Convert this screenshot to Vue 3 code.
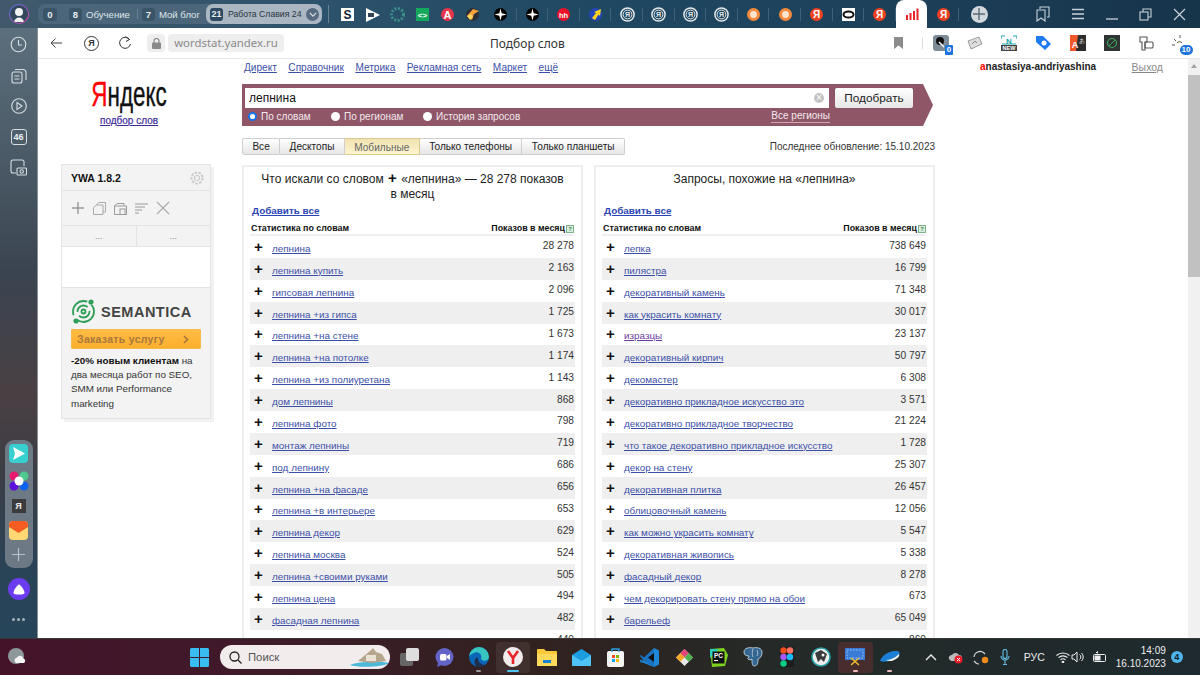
<script setup>
const smallTabs = [
  '<rect x="2" y="2" width="13" height="13" fill="#fff"/><text x="8.5" y="13" font-size="12" font-weight="700" text-anchor="middle" fill="#123">S</text>',
  '<path d="M2 2l14 7-14 7z" fill="#fff"/><path d="M4 7h6v4H4z" fill="#345"/>',
  '<circle cx="8.5" cy="8.5" r="6" fill="none" stroke="#3a8f8a" stroke-width="3" stroke-dasharray="2 1.5"/>',
  '<rect x="2" y="2" width="13" height="13" fill="#14a85c"/><text x="8.5" y="11.5" font-size="8" font-weight="700" text-anchor="middle" fill="#fff">&lt;&gt;</text>',
  '<circle cx="8.5" cy="8.5" r="6.5" fill="#e8354c"/><text x="8.5" y="12.5" font-size="11" font-weight="700" text-anchor="middle" fill="#fff">A</text>',
  '<circle cx="8.5" cy="8.5" r="6.5" fill="#2b3038"/><path d="M3 10l6-7 6 2-5 3-2 6z" fill="#f8a03a"/><path d="M3 10l4-2 2 3-3 3z" fill="#ffd75a"/>'
]
const star = '<circle cx="8.5" cy="8.5" r="6.5" fill="#000"/><path d="M8.5 2.5l1.2 4.8 4.8 1.2-4.8 1.2-1.2 4.8-1.2-4.8-4.8-1.2 4.8-1.2z" fill="#fff"/>'
const yaRing = '<circle cx="8.5" cy="8.5" r="6.6" fill="none" stroke="#e6e9ec" stroke-width="1.5"/><circle cx="8.5" cy="8.5" r="4.4" fill="none" stroke="#e6e9ec" stroke-width="1"/><text x="8.5" y="11" font-size="7" font-weight="700" text-anchor="middle" fill="#e6e9ec">Я</text>'
const orange = '<circle cx="8.5" cy="8.5" r="6.5" fill="#f58a3c"/><circle cx="8.5" cy="8.5" r="3.4" fill="#ffe3cf"/>'
const yaRed = '<circle cx="8.5" cy="8.5" r="6.5" fill="#f0401f"/><text x="8.5" y="12.2" font-size="10" font-weight="700" text-anchor="middle" fill="#fff">Я</text>'
const wideTabs = [
  star, star,
  '<circle cx="8.5" cy="8.5" r="6.5" fill="#e8132a"/><text x="8.5" y="11.5" font-size="7.5" font-weight="700" text-anchor="middle" fill="#fff">hh</text>',
  '<circle cx="8.5" cy="8.5" r="6.5" fill="#2446b8"/><path d="M5 12l4-5-2-1 7-3-1 7-1.5-1.5L8 14z" fill="#ffd21f"/>',
  yaRing, yaRing, yaRing, yaRing, orange, orange, yaRed,
  '<rect x="2" y="2" width="13" height="13" fill="#fff"/><ellipse cx="8.5" cy="8.5" rx="5" ry="3" fill="none" stroke="#111" stroke-width="2"/>',
  yaRed,
  '<path d="M3 9h2v5H3zM6.5 7h2v7h-2zM10 5h2v9h-2zM13.500 2.500h2V14h-2z" fill="#e8232a"/>',
  yaRed
]

const leftRows = [
  ['лепнина', '28 278'], ['лепнина купить', '2 163'], ['гипсовая лепнина', '2 096'],
  ['лепнина +из гипса', '1 725'], ['лепнина +на стене', '1 673'], ['лепнина +на потолке', '1 174'],
  ['лепнина +из полиуретана', '1 143'], ['дом лепнины', '868'], ['лепнина фото', '798'],
  ['монтаж лепнины', '719'], ['под лепнину', '686'], ['лепнина +на фасаде', '656'],
  ['лепнина +в интерьере', '653'], ['лепнина декор', '629'], ['лепнина москва', '524'],
  ['лепнина +своими руками', '505'], ['лепнина цена', '494'], ['фасадная лепнина', '482'],
  ['', '440']
]
const rightRows = [
  ['лепка', '738 649'], ['пилястра', '16 799'], ['декоративный камень', '71 348'],
  ['как украсить комнату', '30 017'], ['изразцы', '23 137', true], ['декоративный кирпич', '50 797'],
  ['декомастер', '6 308'], ['декоративно прикладное искусство это', '3 571'],
  ['декоративно прикладное творчество', '21 224'], ['что такое декоративно прикладное искусство', '1 728'],
  ['декор на стену', '25 307'], ['декоративная плитка', '26 457'], ['облицовочный камень', '12 056'],
  ['как можно украсить комнату', '5 547'], ['декоративная живопись', '5 338'], ['фасадный декор', '8 278'],
  ['чем декорировать стену прямо на обои', '673'], ['барельеф', '65 049'], ['', '860']
]
const cards = [
  { title: ['Что искали со словом', '«лепнина» — 28 278 показов в месяц'], rows: leftRows },
  { title: ['Запросы, похожие на «лепнина»'], rows: rightRows }
]
const topLinks = ['Директ', 'Справочник', 'Метрика', 'Рекламная сеть', 'Маркет', 'ещё']
const modes = ['Все', 'Десктопы', 'Мобильные', 'Только телефоны', 'Только планшеты']
const radios = ['По словам', 'По регионам', 'История запросов']
</script>

<template>
  <div class="app">
    <header class="topbar">
      <div class="avatar"><div class="avatar-in"><svg width="16" height="16" viewBox="0 0 16 16"><circle cx="8" cy="6" r="4" fill="#f2f2f2"/><path d="M3 16c1-6 9-6 10 0z" fill="#f2f2f2"/></svg></div></div>
      <div class="groups">
        <span class="count first">0</span>
        <span class="count">8</span><span class="gname">Обучение</span>
        <i class="gsep"></i>
        <span class="count">7</span><span class="gname">Мой блог</span>
        <div class="gactive">
          <span class="count dark">21</span><span class="gname dk">Работа Славия 24</span>
          <span class="chev"><svg width="8" height="5" viewBox="0 0 10 6"><path d="M1 1l4 4 4-4" fill="none" stroke="#dfe5ea" stroke-width="1.4"/></svg></span>
        </div>
      </div>
      <i class="tsep"></i>
      <div class="tab small" v-for="(t, i) in smallTabs" :key="'s' + i">
        <svg width="17" height="17" viewBox="0 0 17 17" v-html="t"></svg>
      </div>
      <div class="tab wide" v-for="(t, i) in wideTabs" :key="'w' + i" :class="{ active: i === 13 }">
        <svg width="17" height="17" viewBox="0 0 17 17" v-html="t"></svg>
      </div>
      <div class="addtab"><svg width="12" height="12" viewBox="0 0 12 12"><path d="M6 0v12M0 6h12" stroke="#5b6b78" stroke-width="1.4"/></svg></div>
      <div class="winbtns">
        <svg width="14" height="16" viewBox="0 0 14 16" fill="none" stroke="#c8d2da" stroke-width="1.1"><path d="M4 3V1h9v10h-2"/><path d="M1 4h8v11l-4-3-4 3z"/></svg>
        <svg width="14" height="12" viewBox="0 0 14 12" stroke="#c8d2da" stroke-width="1.3"><path d="M1 1.500h12M1 6h12M1 10.500h12"/></svg>
        <svg width="12" height="12" viewBox="0 0 12 12" stroke="#c8d2da" stroke-width="1.3"><path d="M0 11h12"/></svg>
        <svg width="13" height="13" viewBox="0 0 13 13" fill="none" stroke="#c8d2da" stroke-width="1.1"><rect x="1" y="4" width="8" height="8"/><path d="M4 4V1h8v8H9"/></svg>
        <svg width="13" height="13" viewBox="0 0 13 13" stroke="#c8d2da" stroke-width="1.2"><path d="M1 1l11 11M12 1L1 12"/></svg>
      </div>
    </header>

    <aside class="sidebar">
      <div class="sideicons">
        <svg width="17" height="17" viewBox="0 0 17 17" fill="none" stroke="#d5dde3" stroke-width="1.1"><circle cx="8.500" cy="8.500" r="7.300"/><path d="M8.500 4v5h3.500"/></svg>
        <svg width="16" height="16" viewBox="0 0 16 16" fill="none" stroke="#d5dde3" stroke-width="1.1"><rect x="1" y="4" width="10" height="11" rx="2"/><path d="M4 1.500h8a3 3 0 0 1 3 3V12M3.500 8h5M3.500 11h5"/></svg>
        <svg width="16" height="16" viewBox="0 0 16 16" fill="none" stroke="#d5dde3" stroke-width="1.1"><circle cx="8" cy="8" r="7.300"/><path d="M6 4.500l5 3.500-5 3.500z"/></svg>
        <div class="sbadge">46</div>
        <svg width="17" height="17" viewBox="0 0 17 17" fill="none" stroke="#d5dde3" stroke-width="1.1"><path d="M6 14H3a2 2 0 0 1-2-2V3a2 2 0 0 1 2-2h9a2 2 0 0 1 2 2v4"/><rect x="7" y="9" width="9.500" height="7" rx="1"/><circle cx="11.700" cy="12.500" r="1.700"/></svg>
      </div>
      <div class="spacer"></div>
      <div class="dock">
        <svg width="19" height="19" viewBox="0 0 19 19"><rect width="19" height="19" rx="4" fill="#35d0cf"/><path d="M4 3l12 6.500L4 16l2-6.500z" fill="#fff"/></svg>
        <svg width="20" height="20" viewBox="0 0 20 20"><circle cx="5" cy="5" r="4.500" fill="#e6186d"/><circle cx="15" cy="5" r="4.500" fill="#4fc98f"/><circle cx="5" cy="15" r="4.500" fill="#5c12d8"/><circle cx="15" cy="15" r="4.500" fill="#0f62f0"/><circle cx="10" cy="10" r="4.500" fill="#fff"/></svg>
        <div class="yabox">Я</div>
        <svg width="19" height="19" viewBox="0 0 19 19"><rect width="19" height="19" rx="4" fill="#ffd873"/><path d="M0 4a4 4 0 0 1 4-4h11a4 4 0 0 1 4 4v2l-9.500 6L0 6z" fill="#f45c22"/></svg>
        <svg width="13" height="13" viewBox="0 0 13 13" stroke="#b9c3cb" stroke-width="1.2"><path d="M6.500 0v13M0 6.500h13"/></svg>
      </div>
      <div class="alice"><svg width="12" height="11" viewBox="0 0 12 11"><path d="M6 .5c1.500 0 5.500 6 5.500 8 0 2-3 2-5.500 2s-5.500 0-5.500-2c0-2 4-8 5.500-8z" fill="#fff"/></svg></div>
      <div class="dots"><i></i><i></i><i></i></div>
    </aside>

    <main class="browser">
      <div class="toolbar">
        <svg class="t-back" width="12" height="12" viewBox="0 0 12 12" fill="none" stroke="#444" stroke-width="1"><path d="M12 6H1M5.500 1.500L1 6l4.500 4.500"/></svg>
        <div class="t-ya">Я</div>
        <svg class="t-reload" width="14" height="14" viewBox="0 0 14 14" fill="none" stroke="#333" stroke-width="1"><path d="M11.500 3.500A5.500 5.500 0 1 0 12.500 8"/><path d="M7.500 .5l4 3-3.500 2"/></svg>
        <div class="t-lock"><svg width="9" height="11" viewBox="0 0 9 11"><rect y="4.500" width="9" height="6.500" rx="1" fill="#8a8a8a"/><path d="M2 5V3a2.500 2.500 0 0 1 5 0v2" fill="none" stroke="#8a8a8a" stroke-width="1.200"/></svg></div>
        <div class="t-url">wordstat.yandex.ru</div>
        <div class="t-title">Подбор слов</div>
        <svg class="t-mark" width="9" height="12" viewBox="0 0 9 12"><path d="M0 0h9v12L4.500 8.500 0 12z" fill="#8c8c8c"/></svg>
        <i class="t-sep"></i>
        <div class="exts">
          <div class="ext"><svg width="16" height="16" viewBox="0 0 16 16"><rect width="16" height="16" rx="3" fill="#7e8b99"/><circle cx="7" cy="6" r="4" fill="#111"/><path d="M6 7l5 5" stroke="#fff" stroke-width="1.500"/></svg><b class="extnum sq">0</b></div>
          <div class="ext"><svg width="16" height="16" viewBox="0 0 16 16"><path d="M1 6l11-4 3 7-11 5z" fill="#ddd" stroke="#888" stroke-width=".8"/><path d="M5 9l3-3 2 2" fill="none" stroke="#888"/></svg></div>
          <div class="ext"><svg width="16" height="16" viewBox="0 0 16 16"><path d="M0 4V1h4M12 1h4v3M1 9h14" fill="none" stroke="#1ba3a8" stroke-width="1.200"/><text x="8" y="8.500" font-size="8" font-weight="700" text-anchor="middle" fill="#1ba3a8">N</text><rect y="10" width="16" height="6" fill="#444"/><text x="8" y="15.200" font-size="5.500" font-weight="700" text-anchor="middle" fill="#fff">NEW</text></svg></div>
          <div class="ext"><svg width="15" height="15" viewBox="0 0 15 15"><path d="M0 0h7l8 8-6 6-9-8z" fill="#1d7bf0"/><circle cx="8" cy="7" r="2.500" fill="#fff"/></svg></div>
          <div class="ext"><svg width="16" height="16" viewBox="0 0 16 16"><rect width="16" height="16" fill="#2c2c2c"/><path d="M0 0h8L6 16H0z" fill="#f0582a"/><text x="5" y="13" font-size="9" font-weight="700" text-anchor="middle" fill="#fff">A</text><text x="12" y="8" font-size="6" text-anchor="middle" fill="#ddd">あ</text></svg></div>
          <div class="ext"><svg width="16" height="16" viewBox="0 0 16 16"><rect width="16" height="16" fill="#2f3432"/><circle cx="8" cy="8" r="4.500" fill="none" stroke="#3ca55c" stroke-width="1.200"/><path d="M5 11l6-6" stroke="#3ca55c"/></svg></div>
          <div class="ext"><svg width="15" height="15" viewBox="0 0 15 15" fill="none" stroke="#555" stroke-width="1.100"><path d="M1 1h7v5H6v8H3V6H1z"/><rect x="6" y="6" width="8" height="6" rx="1"/></svg></div>
          <div class="ext bulb"><svg width="16" height="16" viewBox="0 0 16 16" stroke="#555" stroke-width="1"><path d="M8 0v3M2 4l2 2M0 10h3M5 8a3 3 0 0 1 5 0" fill="none"/></svg><b class="extnum">10</b></div>
        </div>
      </div>

      <div class="page">
        <div class="leftcol">
          <div class="brand">
            <div class="logo"><span class="red">Я</span>ндекс</div>
            <a class="sublink">подбор слов</a>
          </div>
          <div class="ywa">
            <div class="ywa-head">
              <b>YWA 1.8.2</b>
              <svg width="14" height="14" viewBox="0 0 14 14" fill="none" stroke="#c9c9c9" stroke-width="1.100"><circle cx="7" cy="7" r="2.500"/><circle cx="7" cy="7" r="5.500" stroke-dasharray="2.500 1.300" stroke-width="2"/></svg>
            </div>
            <div class="ywa-tools">
              <svg width="14" height="14" viewBox="0 0 14 14" stroke="#999" stroke-width="1.400"><path d="M7 1v12M1 7h12"/></svg>
              <svg width="13" height="13" viewBox="0 0 13 13" fill="none" stroke="#aaa"><path d="M3 3l3-2.500h6.500V10H10"/><path d="M.5 5.500l3-2.500H10v9.500H.5z"/></svg>
              <svg width="13" height="13" viewBox="0 0 13 13" fill="none" stroke="#999"><path d="M.5 4L3 1.500h7v2M.5 4v8.500h12V4z"/><rect x="6" y="7" width="5" height="5.500"/></svg>
              <svg width="13" height="13" viewBox="0 0 13 13" stroke="#999" stroke-width="1.200"><path d="M0 2h13M0 5h10M0 8h7M0 11h4"/></svg>
              <svg width="14" height="14" viewBox="0 0 14 14" stroke="#aaa" stroke-width="1.100"><path d="M1 1l12 12M13 1L1 13"/></svg>
            </div>
            <div class="ywa-tabs"><span>...</span><span>...</span></div>
            <div class="ywa-blank"></div>
            <div class="sem">
              <div class="sem-logo">
                <svg width="25" height="27" viewBox="0 0 25 27" fill="none" stroke="#2f9e58" stroke-width="1.800"><circle cx="12.500" cy="13.500" r="10.500" stroke-dasharray="24 5"/><circle cx="12.500" cy="13.500" r="6" stroke-dasharray="14 4"/><circle cx="12.500" cy="13.500" r="2"/><circle cx="5" cy="23" r="1.700" fill="#2f9e58"/><circle cx="20" cy="4" r="1.700" fill="#2f9e58"/></svg>
                <span>SEMANTICA</span>
              </div>
              <div class="sem-btn"><span>Заказать услугу</span><svg width="6" height="9" viewBox="0 0 6 9" fill="none" stroke="#a8763e" stroke-width="1.600"><path d="M1 1l3.500 3.500L1 8"/></svg></div>
              <p><b>-20% новым клиентам</b> на<br>два месяца работ по SEO,<br>SMM или Performance<br>marketing</p>
            </div>
          </div>
        </div>

        <div class="maincol">
          <nav class="links"><a v-for="l in topLinks" :key="l">{{ l }}</a></nav>
          <div class="band">
            <div class="band-top">
              <div class="query"><span>лепнина</span><span class="clear">×</span></div>
              <div class="submit">Подобрать</div>
            </div>
            <div class="band-bottom">
              <label v-for="(r, i) in radios" :key="r" class="radio"><i :class="{ on: i === 0 }"></i>{{ r }}</label>
              <a class="regions">Все регионы</a>
            </div>
          </div>
          <div class="modes">
            <div class="modegroup"><span v-for="(m, i) in modes" :key="m" :class="{ sel: i === 2 }">{{ m }}</span></div>
            <div class="updated">Последнее обновление: 15.10.2023</div>
          </div>
          <div class="cards">
            <section class="card" v-for="(c, ci) in cards" :key="ci">
              <h3 v-if="c.title.length === 2">Что искали со словом <b class="cross">+</b> «лепнина» — 28 278 показов<br>в месяц</h3>
              <h3 v-else>{{ c.title[0] }}<br>&nbsp;</h3>
              <a class="addall">Добавить все</a>
              <div class="thead"><b>Статистика по словам</b><b>Показов в месяц<i class="help">?</i></b></div>
              <div class="row" v-for="(r, ri) in c.rows" :key="ri">
                <b class="plus" v-if="r[0]">+</b>
                <a :class="{ visited: r[2] }" v-if="r[0]">{{ r[0] }}</a>
                <span class="val">{{ r[1] }}</span>
              </div>
            </section>
          </div>
        </div>

        <div class="rightcol">
          <div class="user"><b><span class="red">a</span>nastasiya-andriyashina</b><a>Выход</a></div>
        </div>
        <div class="scroll">
          <div class="s-arrow"></div>
          <div class="s-thumb"></div>
        </div>
      </div>
    </main>

    <footer class="taskbar">
      <div class="weather"><svg width="19" height="19" viewBox="0 0 19 19"><circle cx="8" cy="8" r="8" fill="#8f979c"/><path d="M8 15a3 3 0 0 1 1-5.500 3.500 3.500 0 0 1 6.500 1A2.500 2.500 0 0 1 16 15z" fill="#f4f4f4"/></svg></div>
      <svg class="win" width="19" height="19" viewBox="0 0 19 19"><path d="M0 1.500A1.500 1.500 0 0 1 1.500 0H9v9H0zM10 0h7.500A1.500 1.500 0 0 1 19 1.500V9h-9zM0 10h9v9H1.500A1.500 1.500 0 0 1 0 17.500zM10 10h9v7.500a1.500 1.500 0 0 1-1.500 1.500H10z" fill="#39bdf0"/></svg>
      <div class="search">
        <svg width="13" height="13" viewBox="0 0 13 13" fill="none" stroke="#222" stroke-width="1.300"><circle cx="5.500" cy="5.500" r="4.500"/><path d="M9 9l3.500 3.500"/></svg>
        <span>Поиск</span>
        <svg class="island" width="40" height="20" viewBox="0 0 40 20"><path d="M0 18c8-4 30-4 40-2-6 4-32 5-40 2z" fill="#4cb8d8"/><path d="M8 14l6-5 6-5 3-3 3 4 6 2 4 7-14 2z" fill="#b5a58c"/><path d="M16 8h10v6H16z" fill="#e9e2d4"/></svg>
      </div>
      <div class="apps">
        <div class="app-i"><svg width="20" height="18" viewBox="0 0 20 18"><rect x="0" y="5" width="13" height="13" rx="2" fill="#666"/><rect x="6" y="0" width="13" height="13" rx="2" fill="#ddd"/></svg></div>
        <div class="app-i"><svg width="19" height="19" viewBox="0 0 19 19"><circle cx="9.500" cy="9" r="9" fill="#6264c8"/><path d="M3 15l-1 4 5-2z" fill="#6264c8"/><rect x="5" y="6" width="6.500" height="6.500" rx="1.500" fill="#fff"/><path d="M12 8l3-2v6l-3-2z" fill="#fff"/></svg></div>
        <div class="app-i"><svg width="20" height="20" viewBox="0 0 20 20"><circle cx="10" cy="10" r="10" fill="#0b66b8"/><path d="M0 10a10 10 0 0 1 20 0c0 4-6 5-8 2 2-5-4-8-7-6-3 1-5 3-5 4z" fill="#36c5c0"/><path d="M8 20c-4-3-3-9 1-10-1 4 3 8 7 8-2 2-5 3-8 2z" fill="#1c2f4c"/></svg><i class="dash"></i></div>
        <div class="app-i cur"><svg width="20" height="20" viewBox="0 0 20 20"><circle cx="10" cy="10" r="10" fill="#f3ecec"/><path d="M5 4l5 7 5-7M10 11v6" fill="none" stroke="#e8232a" stroke-width="2.600"/></svg><i class="dash blue"></i></div>
        <div class="app-i"><svg width="20" height="18" viewBox="0 0 20 18"><path d="M0 2a1 1 0 0 1 1-1h6l2 2h10a1 1 0 0 1 1 1v13H0z" fill="#f9c93a"/><rect y="6" width="20" height="12" fill="#ffd95c"/><rect x="6" y="12" width="8" height="3" fill="#1c7fd6"/></svg></div>
        <div class="app-i"><svg width="19" height="17" viewBox="0 0 19 17"><path d="M0 6l9.500-6L19 6v11H0z" fill="#1c9ce0"/><path d="M0 6l9.500 6L19 6v11H0z" fill="#4fc3f4"/></svg></div>
        <div class="app-i"><svg width="17" height="19" viewBox="0 0 17 19"><rect y="3" width="17" height="16" rx="2" fill="#f4f4f4"/><path d="M5 4V1h7v3" fill="none" stroke="#2aa0e0" stroke-width="1.400"/><rect x="5" y="7" width="3" height="3" fill="#f25022"/><rect x="9" y="7" width="3" height="3" fill="#7fba00"/><rect x="5" y="11" width="3" height="3" fill="#00a4ef"/><rect x="9" y="11" width="3" height="3" fill="#ffb900"/></svg></div>
        <div class="app-i"><svg width="19" height="19" viewBox="0 0 19 19"><path d="M14 0l5 2.500v14L14 19 0 13.500V12l14 3.500z" fill="#1e88d8"/><path d="M14 0L4 9.500 1 7 0 8l3 3.500-3 2L1 15l3-2.500L14 19z" fill="#1a72c0"/><path d="M14 5v9l-6-4.500z" fill="#111"/></svg></div>
        <div class="app-i"><svg width="19" height="19" viewBox="0 0 19 19"><rect x="3.500" y="3.500" width="12" height="12" transform="rotate(45 9.500 9.500)" fill="#e8e8e8"/><path d="M9.500 1l4.200 4.200-4.200 4.300-4.200-4.300z" fill="#e0457a"/><path d="M1 9.500l4.300-4.200 4.200 4.200-4.200 4.200z" fill="#f5a623"/><path d="M18 9.500l-4.300 4.200-4.200-4.200 4.200-4.200z" fill="#4cb050"/></svg></div>
        <div class="app-i"><svg width="19" height="19" viewBox="0 0 19 19"><path d="M1 1l14-1 4 7-3 11-13 1z" fill="#7ed321"/><path d="M1 1l9 0-9 9z" fill="#2bcfb8"/><rect x="3.500" y="3.500" width="12" height="12" fill="#111"/><text x="9.500" y="9.500" font-size="6.500" font-weight="700" text-anchor="middle" fill="#fff">PC</text><path d="M5 12.500h4" stroke="#fff"/></svg></div>
        <div class="app-i"><svg width="20" height="20" viewBox="0 0 20 20"><path d="M1 5c0-4 5-5 9-4 4-1 9 0 9 4 0 5-3 7-4 7 0 3 0 7-4 7-2 0-2-4-2-7-1 1-3 1-4 0-1-1 1-1 1-3-3 0-5-1-5-4z" fill="#336791" stroke="#d8e2ea" stroke-width=".8"/><path d="M10 2c-1 3-1 6 0 8M14 3c1 2 1 4 0 6" fill="none" stroke="#d8e2ea" stroke-width=".7"/></svg></div>
        <div class="app-i"><svg width="14" height="20" viewBox="0 0 14 20"><rect x="-3" y="-1" width="20" height="22" fill="#1d1d1d"/><circle cx="3.500" cy="3.500" r="3.200" fill="#f24e1e"/><circle cx="10" cy="3.500" r="3.200" fill="#ff7262"/><circle cx="3.500" cy="10" r="3.200" fill="#a259ff"/><circle cx="10" cy="10" r="3.200" fill="#1abcfe"/><circle cx="3.500" cy="16.500" r="3.200" fill="#0acf83"/></svg></div>
        <div class="app-i"><svg width="20" height="20" viewBox="0 0 20 20"><circle cx="10" cy="10" r="9" fill="#eee" stroke="#2aa2a8" stroke-width="1.600"/><path d="M4 6l6-3 6 4-3 8-3-3-3 3z" fill="#3a3a3a"/><circle cx="12" cy="8" r="1.500" fill="#fff"/></svg></div>
        <div class="app-i cur red"><svg width="20" height="18" viewBox="0 0 20 18"><rect width="20" height="12" fill="#3a7bd8"/><rect x="2" y="2" width="16" height="8" fill="none" stroke="#9cc4f0" stroke-dasharray="1.500 1.500"/><path d="M6 10l8 7M14 10l-8 7" stroke="#f0c030" stroke-width="1.400"/></svg><i class="dash pink"></i></div>
        <div class="app-i"><svg width="20" height="12" viewBox="0 0 20 12"><path d="M0 10C2 4 10-1 18 0c2 1 2 3 0 5-5 4-12 7-18 5z" fill="#1c7fd6"/><path d="M6 9c4 0 9-2 13-6 1 2-1 4-3 5-3 2-7 3-10 1z" fill="#f2f6fa"/></svg><i class="dash pink low"></i></div>
      </div>
      <div class="tray">
        <svg class="t1" width="12" height="7" viewBox="0 0 12 7" fill="none" stroke="#eee" stroke-width="1.400"><path d="M1 6l5-5 5 5"/></svg>
        <svg width="15" height="13" viewBox="0 0 15 13"><path d="M1 8a3 3 0 0 1 3-4 4 4 0 0 1 7 0 2 2 0 0 1 0 6H3z" fill="#bbb"/><circle cx="10.500" cy="8.500" r="4" fill="#e81e2c"/><path d="M9 7l3 3M12 7l-3 3" stroke="#fff"/></svg>
        <svg class="t3" width="16" height="15" viewBox="0 0 16 15" fill="none" stroke="#ddd" stroke-width="1.100"><path d="M1 7a6 6 0 0 1 10-4l1 1M1 11l2 2a5 5 0 0 0 3 1"/><circle cx="12" cy="10" r="3.200" fill="#f58a1c" stroke="none"/></svg>
        <svg width="10" height="16" viewBox="0 0 10 16" fill="none" stroke="#62c0e8" stroke-width="1.100"><rect x="3" y="0.500" width="4" height="9" rx="2"/><path d="M1 7a4 4 0 0 0 8 0M5 11v4M3 15.500h4"/></svg>
        <span class="lang">РУС</span>
        <svg class="wifi" width="14" height="11" viewBox="0 0 14 11" fill="none" stroke="#eee" stroke-width="1.100"><path d="M.5 3.500a9.500 9.500 0 0 1 13 0M2.500 5.700a6.500 6.500 0 0 1 9 0M4.500 7.800a3.500 3.500 0 0 1 5 0"/><circle cx="7" cy="10" r=".8" fill="#eee"/></svg>
        <svg class="snd" width="14" height="12" viewBox="0 0 14 12" fill="none" stroke="#eee" stroke-width="1"><path d="M1 4h2l3-3v10L3 8H1zM8.500 3.500a3 3 0 0 1 0 5M10.500 2a5.500 5.500 0 0 1 0 8"/></svg>
        <svg class="bat" width="14" height="12" viewBox="0 0 14 12" fill="none" stroke="#eee"><rect x=".5" y="3.500" width="12" height="7" rx="1"/><rect x="1.500" y="4.500" width="6" height="5" fill="#eee" stroke="none"/><path d="M3 2l1.500-1.500v2"/></svg>
        <div class="clock"><div>14:09</div><div>16.10.2023</div></div>
        <div class="notif">4</div>
      </div>
    </footer>
  </div>
</template>

<style>
html, body { margin: 0; padding: 0; overflow: hidden; }
</style>

<style scoped>
.app {
  width: 1200px;
  height: 675px;
  overflow: hidden;
  display: grid;
  grid-template-columns: 38px 1fr;
  grid-template-rows: 28px 610px 37px;
  font-family: "Liberation Sans", Arial, sans-serif;
  color: #222;
}

/* top bar */
.topbar {
  grid-column: 1 / 3;
  display: flex;
  align-items: center;
  background: linear-gradient(90deg, #41596b 0%, #2e536c 25%, #1f4862 50%, #1d4059 75%, #16344a 100%);
  position: relative;
}
.avatar {
  width: 20px;
  height: 20px;
  margin-left: 9px;
  border-radius: 50%;
  padding: 1px;
  box-sizing: border-box;
  background: linear-gradient(135deg, #4a7cf0, #e03fa8);
  flex: none;
}
.avatar-in {
  width: 18px;
  height: 18px;
  border-radius: 50%;
  background: #33485a;
  display: flex;
  align-items: center;
  justify-content: center;
  overflow: hidden;
}
.groups {
  margin-left: 9px;
  width: 284px;
  height: 20px;
  border-radius: 7px;
  background: #4b667a;
  display: flex;
  align-items: center;
  padding-left: 5px;
  box-sizing: border-box;
  flex: none;
  font-size: 9.600px;
  color: #dfe6ec;
}
.count {
  width: 13px;
  height: 13px;
  line-height: 13px;
  border-radius: 3px;
  background: #3a5468;
  text-align: center;
  font-weight: 700;
  font-size: 9.500px;
  color: #e6ecf0;
  flex: none;
}
.count.first { width: 14px; margin-right: 12px; }
.gname { margin-left: 4px; white-space: nowrap; }
.gsep { width: 1px; height: 10px; background: #6b8294; margin: 0 4px 0 7px; flex: none; }
.gactive {
  margin-left: auto;
  width: 116px;
  height: 20px;
  border-radius: 7px;
  background: #aab6c2;
  display: flex;
  align-items: center;
  padding-left: 4px;
  box-sizing: border-box;
  flex: none;
}
.count.dark { background: #2e4a63; font-size: 9px; }
.gname.dk { color: #2a3540; font-size: 8.700px; margin-left: 5px; width: 75px; }
.chev {
  width: 13px;
  height: 13px;
  border-radius: 50%;
  background: #566b80;
  margin-left: 3px;
  display: flex;
  align-items: center;
  justify-content: center;
  flex: none;
}
.tsep { width: 1px; height: 18px; background: #6b8294; margin: 0 6px; flex: none; }
.tab {
  height: 28px;
  display: flex;
  align-items: center;
  justify-content: center;
  flex: none;
  position: relative;
}
.tab.small { width: 25px; }
.tab.wide { width: 31.600px; }
.tab.wide::after {
  content: "";
  position: absolute;
  right: 0;
  top: 8px;
  height: 13px;
  width: 1px;
  background: #3f6178;
}
.tab.active { background: #fff; border-radius: 8px 8px 0 0; }
.tab.active::after { display: none; }
.addtab {
  width: 17px;
  height: 17px;
  border-radius: 50%;
  background: #d2d8dd;
  display: flex;
  align-items: center;
  justify-content: center;
  margin-left: 12px;
  flex: none;
}
.winbtns {
  display: flex;
  align-items: center;
  gap: 21px;
  margin-left: 48px;
}

/* left rail */
.sidebar {
  background: linear-gradient(180deg, #5c6f7d 0%, #45535f 28%, #3a4450 40%, #4a4044 60%, #3d3d44 72%, #2a4356 88%, #27455a 100%);
  display: flex;
  flex-direction: column;
  align-items: center;
  border-right: 1px solid #8a8f94;
  box-sizing: border-box;
}
.sideicons {
  display: flex;
  flex-direction: column;
  align-items: center;
  gap: 14.500px;
  padding-top: 8px;
}
.sbadge {
  width: 14px;
  height: 14px;
  border: 1px solid #d5dde3;
  border-radius: 3px;
  font-size: 9px;
  font-weight: 700;
  color: #eef2f5;
  text-align: center;
  line-height: 14px;
}
.spacer { flex: 1; }
.dock {
  width: 28px;
  height: 128px;
  border-radius: 9px;
  background: #6d7a85;
  display: flex;
  flex-direction: column;
  align-items: center;
  justify-content: space-between;
  padding: 4px 0 7px;
  box-sizing: border-box;
}
.yabox {
  width: 14px;
  height: 14px;
  background: #3b3b3b;
  color: #eee;
  font-size: 9px;
  font-weight: 700;
  text-align: center;
  line-height: 14px;
}
.alice {
  width: 22px;
  height: 22px;
  border-radius: 50%;
  background: #6b3bf0;
  margin-top: 10px;
  display: flex;
  align-items: center;
  justify-content: center;
}
.dots { display: flex; gap: 2px; margin: 18px 0 17px; }
.dots i { width: 3px; height: 3px; border-radius: 50%; background: #a8b4bd; }

/* browser */
.browser {
  background: #fff;
  border-top-right-radius: 8px;
  border-top-left-radius: 6px;
  display: flex;
  flex-direction: column;
  min-height: 0;
  overflow: hidden;
}
.toolbar {
  height: 31px;
  flex: none;
  display: flex;
  align-items: center;
  border-bottom: 1px solid #e8e8e8;
  box-sizing: border-box;
  color: #333;
}
.t-back { margin-left: 12px; flex: none; }
.t-ya {
  width: 13px;
  height: 13px;
  border: 1px solid #333;
  border-radius: 50%;
  margin-left: 22px;
  font-size: 9px;
  font-weight: 700;
  text-align: center;
  line-height: 13px;
  flex: none;
}
.t-reload { margin-left: 19px; flex: none; }
.t-lock {
  width: 18px;
  height: 18px;
  margin-left: 15px;
  background: #eee;
  border-radius: 4px;
  display: flex;
  align-items: center;
  justify-content: center;
  flex: none;
}
.t-url {
  width: 116px;
  height: 18px;
  margin-left: 3px;
  background: #eee;
  border-radius: 4px;
  color: #8a8a8a;
  font-size: 11.400px;
  line-height: 18px;
  text-align: center;
  font-family: "Noto Sans", "Liberation Sans", sans-serif;
  white-space: nowrap;
  flex: none;
}
.t-title {
  margin-left: 206px;
  width: 74px;
  font-size: 12px;
  font-family: "Noto Sans", "Liberation Sans", sans-serif;
  white-space: nowrap;
  flex: none;
}
.t-mark { margin-left: 330px; flex: none; }
.t-sep { width: 1px; height: 12px; background: #ddd; margin-left: 19px; flex: none; }
.exts { display: flex; align-items: center; margin-left: 1px; }
.ext {
  width: 34.200px;
  display: flex;
  justify-content: center;
  position: relative;
  flex: none;
}
.extnum {
  position: absolute;
  background: #1d74dc;
  color: #fff;
  font-size: 8px;
  font-weight: 700;
  line-height: 10px;
  padding: 0 2px;
  border-radius: 5px;
  right: 5px;
  bottom: -4px;
}
.extnum.sq { border-radius: 1px; right: 5px; }

.page {
  flex: 1;
  min-height: 0;
  display: flex;
  overflow: hidden;
  font-size: 10px;
}
.leftcol { width: 204px; flex: none; }
.brand { width: 182px; text-align: center; padding-top: 17px; height: 105px; box-sizing: border-box; }
.logo {
  font-size: 35px;
  line-height: 35px;
  color: #111;
  transform: scaleX(.64);
  white-space: nowrap;
  -webkit-text-stroke: .4px #111;
  margin-bottom: 4px;
}
.logo .red { -webkit-text-stroke-color: #f00; }
.red { color: #f00; }
.sublink { color: #3d2c9a; font-size: 10px; text-decoration: underline; -webkit-text-stroke: .2px #3d2c9a; }
.ywa {
  margin-left: 23px;
  width: 150px;
  height: 255px;
  background: #f3f3f3;
  border: 1px solid #e4e4e4;
  box-sizing: border-box;
  box-shadow: 3px 3px 0 #f2f2f2;
  display: flex;
  flex-direction: column;
}
.ywa-head {
  height: 25px;
  border-bottom: 1px solid #e4e4e4;
  display: flex;
  align-items: center;
  justify-content: space-between;
  padding: 0 6px 0 9px;
  font-size: 10.500px;
  color: #111;
  flex: none;
}
.ywa-tools {
  height: 34px;
  border-bottom: 1px solid #e4e4e4;
  display: flex;
  align-items: center;
  gap: 8px;
  padding-left: 9px;
  flex: none;
}
.ywa-tabs {
  height: 20px;
  display: flex;
  flex: none;
  border-bottom: 1px solid #e4e4e4;
  color: #888;
  font-size: 9px;
}
.ywa-tabs span { flex: 1; text-align: center; line-height: 20px; }
.ywa-tabs span + span { border-left: 1px solid #e4e4e4; }
.ywa-blank { height: 40px; background: #fff; flex: none; }
.sem {
  flex: 1;
  border-top: 1px solid #e4e4e4;
  padding: 10px 9px 0 9px;
}
.sem-logo { display: flex; align-items: center; gap: 5px; height: 27px; }
.sem-logo span { font-size: 14.500px; font-weight: 700; letter-spacing: .5px; color: #444; white-space: nowrap; }
.sem-btn {
  margin-top: 4px;
  height: 20px;
  width: 130px;
  border-radius: 2px;
  background: linear-gradient(180deg, #ffbd45, #fbae2c);
  box-shadow: inset 0 0 0 1px #f6b94e;
  display: flex;
  align-items: center;
  justify-content: space-between;
  padding: 0 12px 0 6px;
  box-sizing: border-box;
  color: #a8763e;
  font-weight: 700;
  font-size: 10.500px;
  letter-spacing: .3px;
}
.sem p { margin: 5px 0 0; font-size: 9.800px; line-height: 14.200px; color: #333; white-space: nowrap; }
.sem p b { color: #111; }

.maincol { width: 693px; flex: none; }
.links { display: flex; gap: 11.500px; height: 25px; padding: 3px 0 0 2px; box-sizing: border-box; font-size: 10.100px; }
.links a { color: #3c4fa8; text-decoration: underline; white-space: nowrap; }
.band {
  width: 691px;
  height: 42px;
  background: #8f5668;
  clip-path: polygon(0 0, 681px 0, 691px 50%, 681px 100%, 0 100%);
  padding: 4px 0 0 3px;
  box-sizing: border-box;
}
.band-top { display: flex; gap: 6px; }
.query {
  width: 584px;
  height: 20px;
  background: #fff;
  display: flex;
  align-items: center;
  justify-content: space-between;
  padding: 0 5px 0 4px;
  box-sizing: border-box;
  font-size: 12px;
  color: #111;
}
.clear {
  width: 10px;
  height: 10px;
  border-radius: 50%;
  background: #c4c4c4;
  color: #fff;
  font-size: 10px;
  line-height: 10px;
  text-align: center;
}
.submit {
  width: 78px;
  height: 20px;
  background: linear-gradient(180deg, #fff, #e6e6e6);
  border-radius: 2px;
  font-size: 11.800px;
  line-height: 20px;
  text-align: center;
  color: #222;
}
.band-bottom { display: flex; align-items: center; height: 14px; color: #f4e9ec; font-size: 10px; margin-top: 1px; }
.radio { display: flex; align-items: center; gap: 4px; white-space: nowrap; width: 83px; margin-left: 3px; }
.radio + .radio { margin-left: 0; width: 92px; }
.radio i { width: 9px; height: 9px; border-radius: 50%; background: #fff; flex: none; }
.radio i.on { background: #fff; border: 2px solid #1a73e8; width: 5px; height: 5px; }
.regions { margin-left: auto; margin-right: 103px; color: #f4e9ec; border-bottom: 1px solid #cfa8b4; line-height: 12px; white-space: nowrap; }
.radio:nth-of-type(3) { width: auto; }
.modes { display: flex; align-items: center; justify-content: space-between; margin-top: 12px; height: 17px; }
.modegroup { display: flex; height: 17px; }
.modegroup span {
  display: block;
  padding: 0 9.400px;
  background: linear-gradient(180deg, #fff, #e6e6e6);
  border: 1px solid #cfcfcf;
  border-left-width: 0;
  box-sizing: border-box;
  line-height: 15px;
  font-size: 10.100px;
  white-space: nowrap;
  color: #222;
}
.modegroup span:first-child { border-left-width: 1px; border-radius: 2px 0 0 2px; }
.modegroup span:last-child { border-radius: 0 2px 2px 0; }
.modegroup span.sel { background: linear-gradient(180deg, #f2e3b0, #fdf4cf); color: #666; border-color: #d9c98e; line-height: 17px; }
.updated { font-size: 10px; color: #333; white-space: nowrap; }
.cards { display: flex; gap: 11px; margin-top: 10px; }
.card {
  width: 341px;
  flex: none;
  border: 2px solid #eee;
  box-sizing: border-box;
  padding: 0 6px 0 6px;
  height: 500px;
}
h3 {
  margin: 0;
  font-weight: 400;
  font-size: 12px;
  line-height: 15px;
  text-align: center;
  padding-top: 5px;
  height: 32px;
  box-sizing: content-box;
  color: #222;
}
.cross { font-size: 15px; line-height: 10px; color: #111; margin: 0 1px; }
.addall {
  display: block;
  color: #2d45b4;
  font-weight: 700;
  font-size: 9.900px;
  text-decoration: underline;
  height: 14px;
  line-height: 14px;
  padding-left: 2px;
}
.thead {
  display: flex;
  justify-content: space-between;
  align-items: center;
  height: 16px;
  border-bottom: 2px solid #eef0f4;
  font-size: 8.900px;
  color: #111;
  box-sizing: border-box;
  margin-top: 2px;
  padding: 2px 1px 0 1px;
}
.help {
  display: inline-block;
  width: 6px;
  height: 6px;
  border: 1px solid #7fb28a;
  background: #d8eedb;
  color: #4c8a58;
  font-size: 6px;
  font-style: normal;
  line-height: 6px;
  text-align: center;
  margin-left: 1px;
}
.row {
  display: flex;
  align-items: center;
  height: 21.880px;
  padding: 0 1px 0 3px;
}
.row:nth-of-type(odd) { background: #efefef; }
.plus { width: 18px; font-size: 15px; line-height: 12px; color: #111; flex: none; margin-left: 1px; }
.row a { color: #3c4fa8; text-decoration: underline; font-size: 9.900px; padding-top: 3px; white-space: nowrap; }
.row a.visited { color: #6a3fa0; }
.val { margin-left: auto; font-size: 10.200px; color: #333; padding-bottom: 2px; }

.rightcol { flex: 1; min-width: 0; }
.user {
  display: flex;
  justify-content: space-between;
  padding: 2px 25px 0 45px;
  font-size: 10px;
  white-space: nowrap;
}
.user a { color: #888; text-decoration: underline; font-size: 10.500px; }
.scroll {
  width: 12px;
  flex: none;
  background: #f1f1f1;
  display: flex;
  flex-direction: column;
  align-items: center;
}
.s-arrow {
  width: 0;
  height: 0;
  margin-top: 5px;
  border-left: 3.500px solid transparent;
  border-right: 3.500px solid transparent;
  border-bottom: 4px solid #a0a0a0;
}
.s-thumb { width: 12px; height: 202px; margin-top: 7px; background: #c1c1c1; }

/* taskbar */
.taskbar {
  grid-column: 1 / 3;
  display: flex;
  align-items: center;
  background: linear-gradient(90deg, #44132a 0%, #3f1a2a 20%, #31221f 45%, #242a28 65%, #1e2a2e 100%);
  border-top: 1px solid #3a3a3a;
  box-sizing: border-box;
  color: #eee;
}
.weather { margin-left: 8px; flex: none; display: flex; }
.win { margin-left: 163px; flex: none; }
.search {
  margin-left: 11px;
  width: 170px;
  height: 24px;
  border-radius: 12px;
  background: #f3ecec;
  display: flex;
  align-items: center;
  padding-left: 9px;
  box-sizing: border-box;
  color: #555;
  font-size: 11.300px;
  flex: none;
  position: relative;
  overflow: hidden;
}
.search span { margin-left: 6px; }
.island { margin-left: auto; }
.apps { display: flex; align-items: center; margin-left: 3px; }
.app-i {
  width: 34.250px;
  height: 31px;
  display: flex;
  align-items: center;
  justify-content: center;
  position: relative;
  flex: none;
  border-radius: 4px;
}
.app-i.cur { background: rgba(255, 255, 255, .07); }
.app-i.cur.red { background: rgba(200, 60, 60, .22); }
.dash {
  position: absolute;
  bottom: 1px;
  left: 50%;
  width: 5px;
  height: 2px;
  margin-left: -2.500px;
  background: #9a9a9a;
  border-radius: 1px;
}
.dash.blue { width: 12px; margin-left: -6px; background: #4fc3f4; }
.dash.pink { background: #f2b8c0; }
.tray { display: flex; align-items: center; margin-left: 18px; flex: none; }
.tray > svg { margin-right: 10px; flex: none; }
.tray > .t1 { margin-right: 11px; }
.tray > .t3 { margin-right: 11px; }
.lang { font-size: 10.500px; margin: 0 11px 0 4px; color: #eee; }
.tray > .wifi { margin-right: 1px; }
.tray > .snd { margin-right: 8px; }
.tray > .bat { margin-right: 9px; }
.clock { text-align: right; font-size: 10px; line-height: 13px; width: 50px; color: #eee; }
.notif {
  width: 12px;
  height: 12px;
  margin-left: 5px;
  border-radius: 50%;
  background: #4fb4ea;
  color: #10202c;
  font-size: 9px;
  font-weight: 700;
  line-height: 12px;
  text-align: center;
}
</style>
